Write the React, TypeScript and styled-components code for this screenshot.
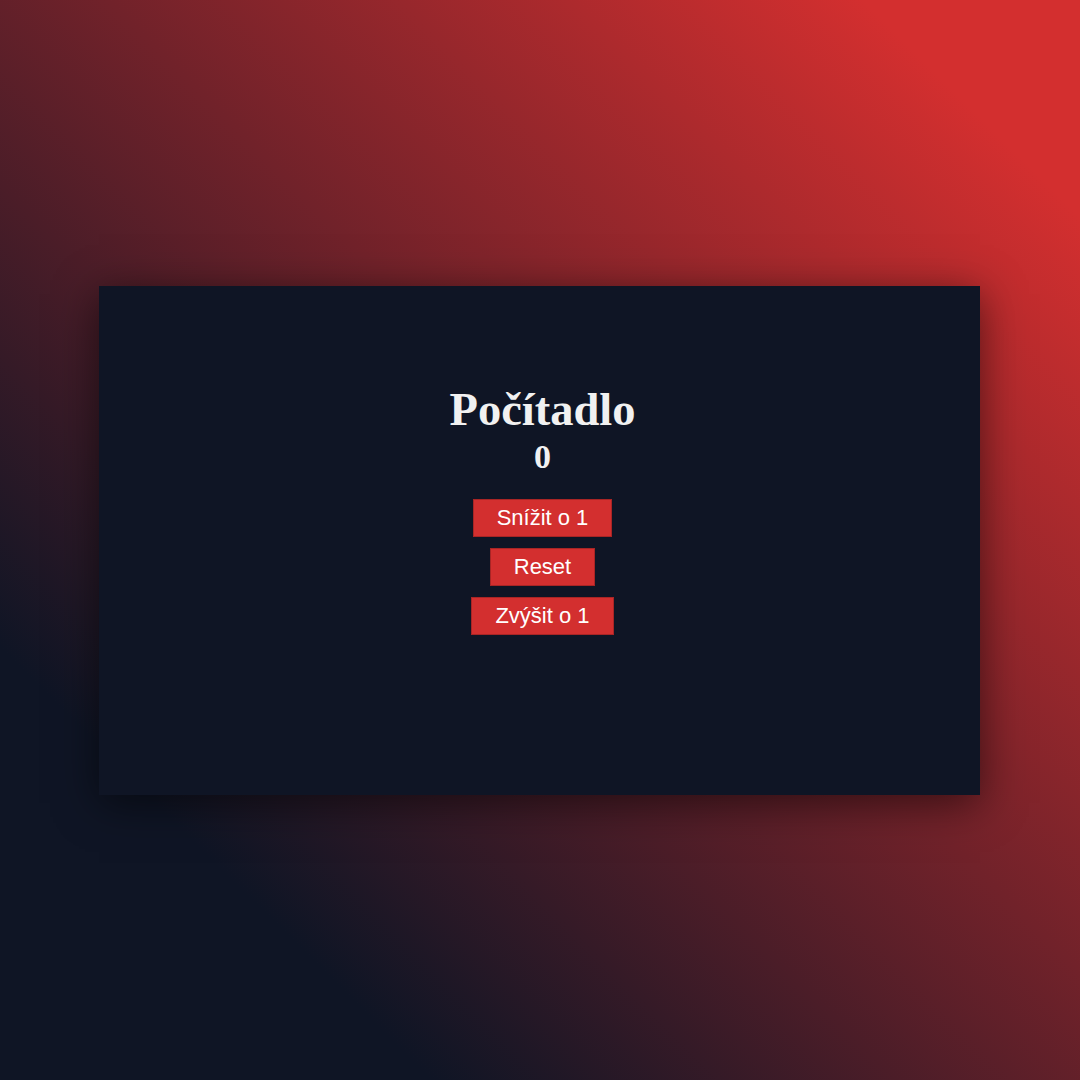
import { useState } from 'react';
import styled, { createGlobalStyle } from 'styled-components';

const GlobalStyle = createGlobalStyle`
  html, body {
    margin: 0;
    padding: 0;
  }
  body {
    font-family: "Liberation Serif", "Times New Roman", serif;
  }
`;

const Page = styled.div`
  min-height: 100vh;
  display: flex;
  align-items: center;
  justify-content: center;
  background: linear-gradient(45deg, #0f1525 20%, #d32f2f 90%);
`;

const Card = styled.div`
  width: 881px;
  height: 509px;
  margin-left: -1px;
  box-sizing: border-box;
  padding: 97px 0 0 6px;
  background-color: #0f1525;
  box-shadow: 0 8px 40px rgba(0, 0, 0, 0.55);
  display: flex;
  flex-direction: column;
  align-items: center;
  color: #f1f1f1;
`;

const Title = styled.h1`
  margin: 0;
  font-size: 46.5px;
  font-weight: bold;
  line-height: normal;
`;

const Count = styled.div`
  margin-top: 2px;
  font-size: 34px;
  font-weight: bold;
  line-height: normal;
`;

const Buttons = styled.div`
  margin-top: 23px;
  display: flex;
  flex-direction: column;
  align-items: center;
  gap: 11px;
`;

const Button = styled.button`
  height: 38px;
  padding: 0 23px;
  background-color: #d32f2f;
  border: 1px solid #a92525;
  color: #ffffff;
  font-family: "Liberation Sans", Arial, sans-serif;
  font-size: 22px;
  cursor: pointer;
`;

const App = () => {
  const [count, setCount] = useState(0);

  return (
    <Page>
      <GlobalStyle />
      <Card>
        <Title>Počítadlo</Title>
        <Count>{count}</Count>
        <Buttons>
          <Button onClick={() => setCount(count - 1)}>Snížit o 1</Button>
          <Button onClick={() => setCount(0)}>Reset</Button>
          <Button onClick={() => setCount(count + 1)}>Zvýšit o 1</Button>
        </Buttons>
      </Card>
    </Page>
  );
};

export default App;
